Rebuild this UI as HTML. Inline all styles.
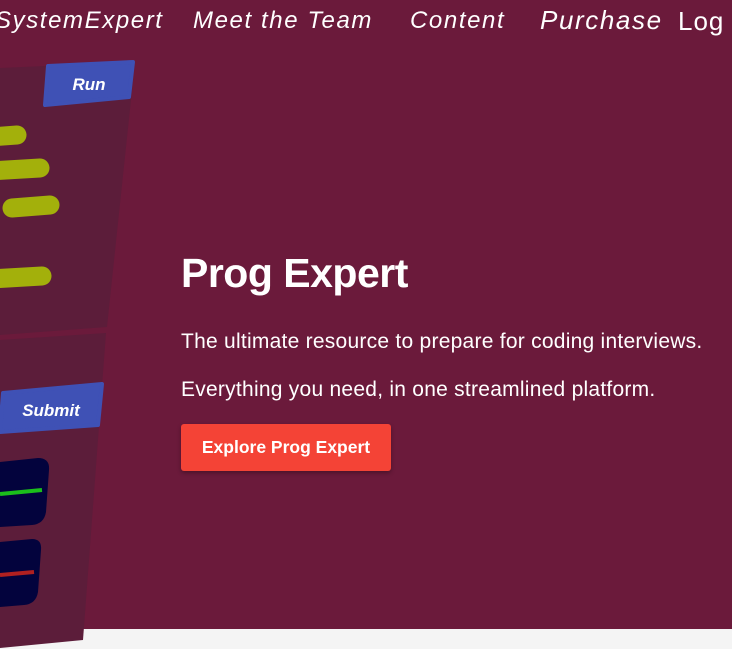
<!DOCTYPE html>
<html><head><style>
html,body{margin:0;padding:0;width:732px;height:649px;overflow:hidden;background:#f4f4f4;font-family:"Liberation Sans",Arial,sans-serif}
.hero{position:absolute;left:0;top:0;width:732px;height:629px;background:#6b1a3b}
.nav{position:absolute;top:7px;font-size:24px;color:#fff;font-style:italic;white-space:nowrap;letter-spacing:1.6px}
h1{position:absolute;left:181px;top:250px;margin:0;font-size:41px;color:#fff;font-weight:bold;letter-spacing:-0.5px}
p{position:absolute;left:181px;margin:0;color:#fff;font-size:21px;letter-spacing:0.25px}
.btn{position:absolute;left:181px;top:424px;width:210px;height:47px;background:#f44336;border-radius:3px;color:#fff;font-weight:bold;font-size:17.5px;line-height:47px;text-align:center;box-shadow:0 2px 4px rgba(0,0,0,.3)}
svg{position:absolute;left:0;top:0}
</style></head><body>
<div class="hero"></div>
<svg width="732" height="649">
<polygon points="0,68 135,62 107,327 0,335" fill="#5c1d3a"/>
<polygon points="0,340 106,333 83,640 0,648" fill="#5c1d3a"/>
<polygon points="48,66 133,62 129,97 45,105" fill="#3f51b5" stroke="#3f51b5" stroke-linejoin="round" stroke-width="4"/>
<text x="89" y="90" fill="#fff" font-size="17" font-weight="bold" font-style="italic" text-anchor="middle" font-family="Liberation Sans">Run</text>
<g stroke="#a3b00b" stroke-width="19" stroke-linecap="round">
<line x1="-10" y1="137" x2="17" y2="135"/>
<line x1="-10" y1="171" x2="40" y2="168"/>
<line x1="12" y1="208" x2="50" y2="205"/>
<line x1="-10" y1="279" x2="42" y2="276"/>
</g>
<polygon points="3,393 102,384 98,425 0,432" fill="#3f51b5" stroke="#3f51b5" stroke-linejoin="round" stroke-width="4"/>
<text x="51" y="416" fill="#fff" font-size="17" font-weight="bold" font-style="italic" text-anchor="middle" font-family="Liberation Sans">Submit</text>
<path d="M0,462 L38,458 Q50,458 49,470 L46,512 Q44,524 32,525 L0,527 Z" fill="#03033d"/>
<line x1="0" y1="494" x2="42" y2="490" stroke="#1bbf1b" stroke-width="4"/>
<path d="M0,542 L32,539 Q42,539 41,550 L38,592 Q36,604 24,605 L0,607 Z" fill="#03033d"/>
<line x1="0" y1="575" x2="34" y2="572" stroke="#b02020" stroke-width="4"/>
</svg>
<div class="nav" style="left:-5px">SystemExpert</div>
<div class="nav" style="left:193px">Meet the Team</div>
<div class="nav" style="left:410px">Content</div>
<div class="nav" style="left:540px;font-size:26px;top:5px">Purchase</div>
<div class="nav" style="left:678px;font-style:normal;font-size:26px;top:6px;letter-spacing:1px">Log</div>
<h1>Prog Expert</h1>
<p style="top:330px">The ultimate resource to prepare for coding interviews.</p>
<p style="top:378px">Everything you need, in one streamlined platform.</p>
<div class="btn">Explore Prog Expert</div>
</body></html>
